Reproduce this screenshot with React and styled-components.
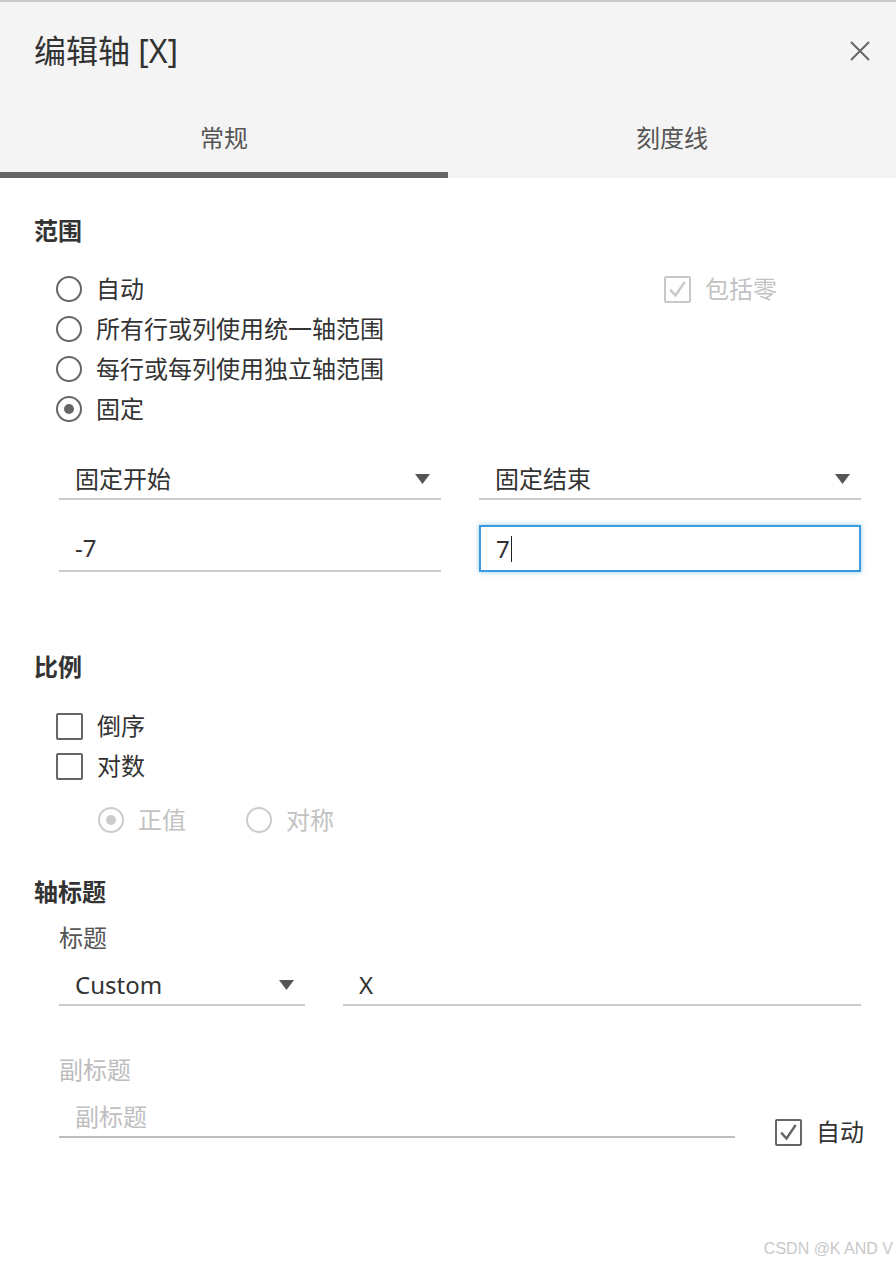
import React from "react";
import styled, { createGlobalStyle } from "styled-components";

const GlobalStyle = createGlobalStyle`
  html, body { margin: 0; padding: 0; background: #fff; }
  body {
    font-family: "Noto Sans", "Noto Sans CJK SC", sans-serif;
    color: #333;
  }
  * { box-sizing: border-box; }
`;

const Dialog = styled.div`
  position: relative;
  width: 896px;
  height: 1264px;
  overflow: hidden;
  background: #fff;
`;

const Header = styled.header`
  background: #f4f4f4;
  border-top: 2px solid #c8c8c8;
`;

const TitleBar = styled.div`
  height: 98px;
  display: flex;
  align-items: center;
  justify-content: space-between;
  padding: 0 26px 0 34px;
`;

const Title = styled.h1`
  margin: 0;
  font-size: 32px;
  line-height: 44px;
  font-weight: 400;
  color: #333;
`;

const CloseButton = styled.button`
  width: 20px;
  height: 20px;
  padding: 0;
  border: 0;
  background: none;
  display: flex;
  cursor: pointer;
`;

const Tabs = styled.div`
  display: grid;
  grid-template-columns: 1fr 1fr;
`;

const Tab = styled.div`
  height: 78px;
  padding-top: 4px;
  display: flex;
  align-items: center;
  justify-content: center;
  font-size: 24px;
  line-height: 32px;
  color: #555;
  border-bottom: 6px solid ${(p) => (p.$active ? "#666" : "transparent")};
`;

const Body = styled.main`
  padding: 0 35px 0 34px;
`;

const SectionTitle = styled.h2`
  margin: ${(p) => p.$top}px 0 0;
  font-size: 24px;
  line-height: 32px;
  font-weight: 700;
  color: #333;
`;

const RangeGrid = styled.div`
  display: grid;
  grid-template-columns: 608px 1fr;
  margin-top: 22px;
  padding-left: 22px;
`;

const OptionList = styled.div`
  display: flex;
  flex-direction: column;
  align-items: flex-start;
  margin-top: ${(p) => p.$top || 0}px;
  padding-left: ${(p) => p.$indent || 0}px;
`;

const OptionRow = styled.div`
  display: flex;
  align-items: center;
  gap: ${(p) => p.$gap || 0}px;
  height: 40px;
  margin-top: ${(p) => p.$top || 0}px;
  padding-left: ${(p) => p.$indent || 0}px;
`;

const Option = styled.label`
  display: flex;
  align-items: center;
  gap: 14px;
  height: 40px;
  flex: none;
  white-space: nowrap;
  font-size: 24px;
  line-height: 32px;
  color: ${(p) => (p.$disabled ? "#c2c2c2" : "#333")};
`;

const RadioCircle = styled.span`
  width: 26px;
  height: 26px;
  border-radius: 50%;
  border: 2px solid ${(p) => (p.$disabled ? "#cccccc" : "#666")};
  display: flex;
  align-items: center;
  justify-content: center;
  flex: none;
  &::after {
    content: "";
    display: ${(p) => (p.$checked ? "block" : "none")};
    width: 10px;
    height: 10px;
    border-radius: 50%;
    background: ${(p) => (p.$disabled ? "#cccccc" : "#666")};
  }
`;

const Box = styled.span`
  width: 27px;
  height: 27px;
  border-radius: 2px;
  border: 2px solid ${(p) => (p.$disabled ? "#c8c8c8" : "#666")};
  display: flex;
  align-items: center;
  justify-content: center;
  flex: none;
`;

const Radio = ({ checked, disabled, children }) => (
  <Option $disabled={disabled}>
    <RadioCircle $checked={checked} $disabled={disabled} />
    {children}
  </Option>
);

const Checkbox = ({ checked, disabled, children, className }) => (
  <Option $disabled={disabled} className={className}>
    <Box $disabled={disabled}>
      {checked && (
        <svg width="21" height="21" viewBox="0 0 21 21">
          <path
            d="M4 11.5 L8.5 16.5 L17 4"
            fill="none"
            stroke={disabled ? "#c8c8c8" : "#666"}
            strokeWidth="2.4"
            strokeLinecap="square"
          />
        </svg>
      )}
    </Box>
    {children}
  </Option>
);

const FieldGrid = styled.div`
  display: grid;
  grid-template-columns: ${(p) => p.$cols || "1fr 1fr"};
  column-gap: 38px;
  row-gap: 25px;
  margin-top: ${(p) => p.$top || 0}px;
  padding-left: 25px;
`;

const Select = styled.div`
  height: 48px;
  padding: 8px 11px 0 16px;
  display: flex;
  align-items: center;
  justify-content: space-between;
  border-bottom: 2px solid #cccccc;
  font-size: 24px;
  line-height: 32px;
  color: #333;
`;

const TextField = styled.div`
  height: ${(p) => (p.$tall ? 48 : 47)}px;
  padding: ${(p) => (p.$focused ? "0 15px" : p.$tall ? "8px 16px 0" : "0 16px")};
  display: flex;
  align-items: center;
  font-size: 24px;
  line-height: 32px;
  color: ${(p) => (p.$placeholder ? "#c0c0c0" : "#333")};
  border: ${(p) => (p.$focused ? "2px solid #3b9be0" : "0")};
  border-bottom: 2px solid
    ${(p) => (p.$focused ? "#3b9be0" : p.$strong ? "#bdbdbd" : "#cccccc")};
  box-shadow: ${(p) => (p.$focused ? "0 0 5px rgba(59,155,224,0.55)" : "none")};
  width: ${(p) => (p.$width ? `${p.$width}px` : "auto")};
  flex: none;
`;

const Caret = styled.span`
  display: inline-block;
  width: 1px;
  height: 26px;
  margin-left: 1px;
  background: #222;
`;

const Arrow = () => (
  <svg width="15" height="10" viewBox="0 0 15 10">
    <path d="M0 0 H15 L7.5 10 Z" fill="#555" />
  </svg>
);

const FieldLabel = styled.div`
  margin-top: ${(p) => p.$top}px;
  padding-left: 25px;
  font-size: 24px;
  line-height: 32px;
  color: ${(p) => (p.$muted ? "#bdbdbd" : "#555")};
`;

const SubtitleRow = styled.div`
  display: flex;
  align-items: flex-end;
  gap: 40px;
  margin-top: 4px;
  padding-left: 25px;
`;

const AutoCheck = styled(Checkbox)`
  margin-bottom: -14px;
`;

const Watermark = styled.div`
  position: absolute;
  right: 3px;
  bottom: 5px;
  font-family: "Liberation Sans", Arial, sans-serif;
  font-size: 16px;
  line-height: 20px;
  color: #c8c8c8;
`;

export default function App() {
  return (
    <>
      <GlobalStyle />
      <Dialog>
        <Header>
          <TitleBar>
            <Title>编辑轴 [X]</Title>
            <CloseButton aria-label="关闭">
              <svg width="20" height="20" viewBox="0 0 20 20">
                <path
                  d="M1 1 L19 19 M19 1 L1 19"
                  stroke="#666"
                  strokeWidth="2"
                  fill="none"
                />
              </svg>
            </CloseButton>
          </TitleBar>
          <Tabs>
            <Tab $active>常规</Tab>
            <Tab>刻度线</Tab>
          </Tabs>
        </Header>

        <Body>
          <SectionTitle $top={37}>范围</SectionTitle>
          <RangeGrid>
            <OptionList>
              <Radio>自动</Radio>
              <Radio>所有行或列使用统一轴范围</Radio>
              <Radio>每行或每列使用独立轴范围</Radio>
              <Radio checked>固定</Radio>
            </OptionList>
            <OptionList>
              <Checkbox checked disabled>
                包括零
              </Checkbox>
            </OptionList>
          </RangeGrid>

          <FieldGrid $top={23}>
            <Select>
              固定开始
              <Arrow />
            </Select>
            <Select>
              固定结束
              <Arrow />
            </Select>
            <TextField>-7</TextField>
            <TextField $focused>
              7<Caret />
            </TextField>
          </FieldGrid>

          <SectionTitle $top={79}>比例</SectionTitle>
          <OptionList $top={23} $indent={22}>
            <Checkbox>倒序</Checkbox>
            <Checkbox>对数</Checkbox>
          </OptionList>
          <OptionRow $top={14} $indent={64} $gap={60}>
            <Radio checked disabled>
              正值
            </Radio>
            <Radio disabled>对称</Radio>
          </OptionRow>

          <SectionTitle $top={36}>轴标题</SectionTitle>
          <FieldLabel $top={14}>标题</FieldLabel>
          <FieldGrid $top={4} $cols="246px 1fr">
            <Select>
              Custom
              <Arrow />
            </Select>
            <TextField $tall>X</TextField>
          </FieldGrid>

          <FieldLabel $top={48} $muted>
            副标题
          </FieldLabel>
          <SubtitleRow>
            <TextField $tall $placeholder $strong $width={676}>
              副标题
            </TextField>
            <AutoCheck checked>自动</AutoCheck>
          </SubtitleRow>
        </Body>

        <Watermark>CSDN @K AND V</Watermark>
      </Dialog>
    </>
  );
}
